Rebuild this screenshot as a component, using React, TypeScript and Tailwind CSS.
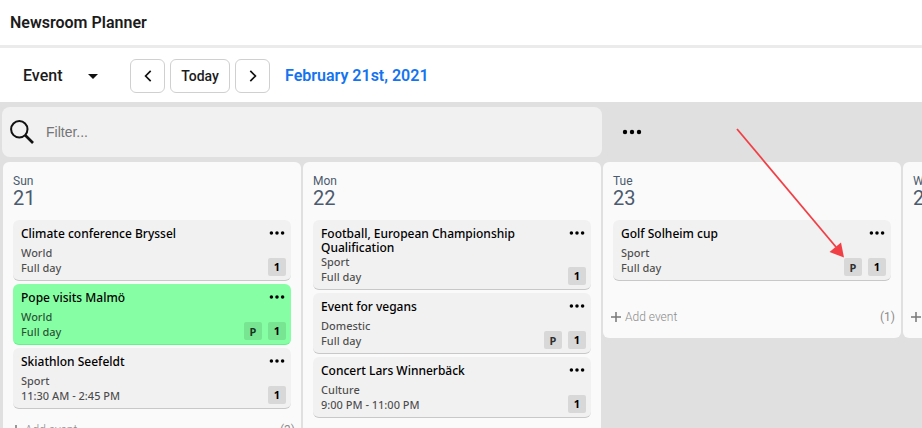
import React, { useState } from 'react';

interface PlannerEvent {
  title: string;
  category: string;
  time: string;
  count: number;
  planned?: boolean;
  highlighted?: boolean;
}

interface PlannerDay {
  name: string;
  date: number;
  events: PlannerEvent[];
}

const days: PlannerDay[] = [
  {
    name: 'Sun',
    date: 21,
    events: [
      { title: 'Climate conference Bryssel', category: 'World', time: 'Full day', count: 1 },
      { title: 'Pope visits Malmö', category: 'World', time: 'Full day', count: 1, planned: true, highlighted: true },
      { title: 'Skiathlon Seefeldt', category: 'Sport', time: '11:30 AM - 2:45 PM', count: 1 }
    ]
  },
  {
    name: 'Mon',
    date: 22,
    events: [
      { title: 'Football, European Championship Qualification', category: 'Sport', time: 'Full day', count: 1 },
      { title: 'Event for vegans', category: 'Domestic', time: 'Full day', count: 1, planned: true },
      { title: 'Concert Lars Winnerbäck', category: 'Culture', time: '9:00 PM - 11:00 PM', count: 1 }
    ]
  },
  {
    name: 'Tue',
    date: 23,
    events: [
      { title: 'Golf Solheim cup', category: 'Sport', time: 'Full day', count: 1, planned: true }
    ]
  },
  { name: 'Wed', date: 24, events: [] }
];

const Dots: React.FC<{ className: string }> = ({ className }) => (
  <svg viewBox="0 0 20 6" className={className} fill="currentColor" aria-hidden="true">
    <circle cx="3" cy="3" r="2.2" />
    <circle cx="10" cy="3" r="2.2" />
    <circle cx="17" cy="3" r="2.2" />
  </svg>
);

const EventCard: React.FC<{ event: PlannerEvent }> = ({ event }) => (
  <article
    className={`flex rounded-md border-b pt-[7px] pb-1 pl-2 pr-[5px] ${
      event.highlighted ? 'bg-[#86ffa4] border-[#5ff587]' : 'bg-[#f1f1f1] border-[#c8c8c8]'
    }`}
  >
    <div className="flex-1 min-w-0 pb-px">
      <h3 className="min-h-[19px] -mb-px pr-4 text-[12px] leading-[14px] font-medium text-black">{event.title}</h3>
      <p className="text-[11px] leading-[15px] font-medium text-black/70">{event.category}</p>
      <p className="text-[11px] leading-[15px] font-medium text-black/70">{event.time}</p>
    </div>
    <div className="flex flex-col items-end justify-between">
      <button type="button" aria-label="Event menu" className="px-px py-[3px] text-black">
        <Dots className="w-4 h-[6px]" />
      </button>
      <div className="flex gap-1.5">
        {event.planned && (
          <span className="w-[18px] h-[18px] rounded-xs bg-black/10 text-center text-[11px] leading-[20px] font-bold text-black/80">
            P
          </span>
        )}
        <span className="w-[18px] h-[18px] rounded-xs bg-black/10 text-center text-[11px] leading-[17px] font-bold text-black">
          {event.count}
        </span>
      </div>
    </div>
  </article>
);

const DayColumn: React.FC<{ day: PlannerDay }> = ({ day }) => (
  <section className="w-[298px] shrink-0 rounded-md bg-[#fafafa]">
    <header className="px-2.5 py-3 font-[Roboto,sans-serif] text-[#4b5a6e]">
      <div className="text-[12px] leading-[14px]">{day.name}</div>
      <div className="text-[20px] leading-5">{day.date}</div>
    </header>
    <div className="flex flex-col gap-[3px] min-h-[76px] px-2.5">
      {day.events.map((event) => (
        <EventCard key={event.title} event={event} />
      ))}
    </div>
    <div className="flex items-center justify-between h-[42px] pl-2 pr-1.5 font-[Roboto,sans-serif] text-[#8c8c8c]">
      <button type="button" className="flex items-center gap-1 text-[12px] font-light">
        <svg viewBox="0 0 10 10" className="w-2.5 h-2.5" stroke="#777" strokeWidth="1.5" aria-hidden="true">
          <path d="M5 0v10M0 5h10" />
        </svg>
        Add event
      </button>
      <span className="text-[12px]">({day.events.length})</span>
    </div>
  </section>
);

export default function App() {
  const [view, setView] = useState('Event');
  const [filter, setFilter] = useState('');

  return (
    <div className="relative flex flex-col h-screen overflow-hidden bg-[#e0e0e0] font-['Noto_Sans',sans-serif]">
      <header className="shrink-0 h-12 px-2.5 bg-white border-b-3 border-[#ebebeb]">
        <h1 className="font-[Roboto,sans-serif] text-[16px] leading-[45px] font-semibold text-[#1c1c1c]">
          Newsroom Planner
        </h1>
      </header>

      {/* Toolbar */}
      <div className="flex items-center shrink-0 h-[54px] pt-0.5 pl-[23px] bg-white font-[Roboto,sans-serif] text-[#1c1c1c]">
        <div className="relative">
          <select
            aria-label="View"
            value={view}
            onChange={(e) => setView(e.target.value)}
            className="w-[75px] appearance-none bg-transparent text-[16px] leading-6 font-medium"
          >
            <option>Event</option>
            <option>Planning</option>
          </select>
          <svg viewBox="0 0 10 5" className="absolute right-0 top-2.5 w-2.5 h-[5px] pointer-events-none" aria-hidden="true">
            <path d="M0 0h10L5 5z" fill="#111" />
          </svg>
        </div>
        <div className="flex gap-[5px] ml-8">
          <button type="button" aria-label="Previous" className="flex items-center justify-center w-[35px] h-[34px] rounded-md border border-[#d0d0d0]">
            <svg viewBox="0 0 8 12" className="w-2 h-3" fill="none" stroke="#111" strokeWidth="1.7" aria-hidden="true">
              <path d="M6.7 0.8L1.6 6l5.1 5.2" />
            </svg>
          </button>
          <button type="button" className="w-[60px] h-[34px] rounded-md border border-[#d0d0d0] text-[14px] font-medium">
            Today
          </button>
          <button type="button" aria-label="Next" className="flex items-center justify-center w-[35px] h-[34px] rounded-md border border-[#d0d0d0]">
            <svg viewBox="0 0 8 12" className="w-2 h-3" fill="none" stroke="#111" strokeWidth="1.7" aria-hidden="true">
              <path d="M1.3 0.8L6.4 6l-5.1 5.2" />
            </svg>
          </button>
        </div>
        <span className="ml-[15px] text-[16px] font-semibold text-[#1473f0]">February 21st, 2021</span>
      </div>

      {/* Filter */}
      <div className="flex items-center shrink-0 py-[5px] pl-0.5">
        <label className="flex items-center w-[600px] h-[50px] pl-2 rounded-lg bg-[#f1f1f1]">
          <svg viewBox="0 0 24 24" className="w-6 h-6" fill="none" stroke="#111" aria-hidden="true">
            <circle cx="9.3" cy="9.3" r="8.2" strokeWidth="2" />
            <path d="M15 15l8 8" strokeWidth="2.6" />
          </svg>
          <input
            type="text"
            aria-label="Filter"
            value={filter}
            onChange={(e) => setFilter(e.target.value)}
            placeholder="Filter..."
            className="flex-1 ml-3 bg-transparent outline-none font-['Liberation_Sans',sans-serif] text-[14px] placeholder:text-[#757575]"
          />
        </label>
        <button type="button" aria-label="More filters" className="ml-5 p-0 text-black">
          <Dots className="w-5 h-[6px]" />
        </button>
      </div>

      {/* Board */}
      <main className="flex items-start gap-0.5 flex-1 min-h-0 pl-[3px]">
        {days.map((day) => (
          <DayColumn key={day.name} day={day} />
        ))}
      </main>

      {/* Arrow pointing at the planning badge */}
      <svg viewBox="0 0 110 132" className="absolute left-[735px] top-[127px] w-[110px] h-[132px] pointer-events-none" aria-hidden="true">
        <path d="M2 2l99 118" stroke="#f04046" strokeWidth="1.8" />
        <path d="M109 130.5l-14.5-5.5L106 115.5z" fill="#f04046" />
      </svg>
    </div>
  );
}
